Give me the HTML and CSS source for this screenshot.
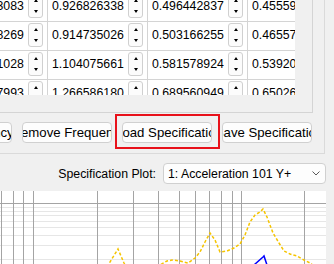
FILE: index.html
```html
<!DOCTYPE html>
<html>
<head>
  <title>Specification</title>
  <meta charset="UTF-8">
  <link rel="stylesheet" href="styles.css">
</head>
<body>
  <div class="panel">
    <div class="table-box">
      <div class="viewport">
        <div class="sheet">
          <div class="row">
            <div class="cell"><span class="val">0.853853083</span><span class="spin"></span></div>
            <div class="cell"><span class="val">0.926826338</span><span class="spin"></span></div>
            <div class="cell"><span class="val">0.496442837</span><span class="spin"></span></div>
            <div class="cell"><span class="val">0.455591203</span><span class="spin"></span></div>
          </div>
          <div class="row">
            <div class="cell"><span class="val">0.854718269</span><span class="spin"></span></div>
            <div class="cell"><span class="val">0.914735026</span><span class="spin"></span></div>
            <div class="cell"><span class="val">0.503166255</span><span class="spin"></span></div>
            <div class="cell"><span class="val">0.465572918</span><span class="spin"></span></div>
          </div>
          <div class="row">
            <div class="cell"><span class="val">1.012591028</span><span class="spin"></span></div>
            <div class="cell"><span class="val">1.104075661</span><span class="spin"></span></div>
            <div class="cell"><span class="val">0.581578924</span><span class="spin"></span></div>
            <div class="cell"><span class="val">0.539205816</span><span class="spin"></span></div>
          </div>
          <div class="row">
            <div class="cell"><span class="val">1.140767993</span><span class="spin"></span></div>
            <div class="cell"><span class="val">1.266586180</span><span class="spin"></span></div>
            <div class="cell"><span class="val">0.689560949</span><span class="spin"></span></div>
            <div class="cell"><span class="val">0.650264171</span><span class="spin"></span></div>
          </div>
        </div>
      </div>
    </div>
    <div class="actions">
      <button><span>Add Frequency</span></button>
      <button><span>Remove Frequency</span></button>
      <div class="focus-ring">
        <button><span>Load Specification</span></button>
      </div>
      <button><span>Save Specification</span></button>
    </div>
  </div>

  <div class="plot-row">
    <span>Specification Plot:</span>
    <div class="combo">
      <span>1: Acceleration 101 Y+</span>
      <svg width="8" height="5" viewBox="0 0 8 5"><polyline points="0.5,0.5 4,4 7.5,0.5" fill="none" stroke="#5a5a5a" stroke-width="1"/></svg>
    </div>
  </div>

  <div class="plot">
    <svg width="326" height="73" viewBox="0 0 326 73">
      <!-- minor horizontal grid -->
      <g stroke="#e6e6e6" stroke-width="1">
        <line x1="0" y1="16.5" x2="326" y2="16.5"/>
        <line x1="0" y1="20.5" x2="326" y2="20.5"/>
        <line x1="0" y1="24.5" x2="326" y2="24.5"/>
        <line x1="0" y1="30.5" x2="326" y2="30.5"/>
        <line x1="0" y1="36.5" x2="326" y2="36.5"/>
        <line x1="0" y1="44.5" x2="326" y2="44.5"/>
        <line x1="0" y1="54.5" x2="326" y2="54.5"/>
        <line x1="0" y1="68.5" x2="326" y2="68.5"/>
      </g>
      <!-- major grid -->
      <g stroke="#a4a4a4" stroke-width="1">
        <line x1="0" y1="12.5" x2="326" y2="12.5"/>
        <line x1="1.5" y1="0" x2="1.5" y2="73"/>
        <line x1="13.5" y1="0" x2="13.5" y2="73"/>
        <line x1="23.5" y1="0" x2="23.5" y2="73"/>
        <line x1="33.5" y1="0" x2="33.5" y2="73"/>
        <line x1="97.5" y1="0" x2="97.5" y2="73"/>
        <line x1="133.5" y1="0" x2="133.5" y2="73"/>
        <line x1="158.5" y1="0" x2="158.5" y2="73"/>
        <line x1="179.5" y1="0" x2="179.5" y2="73"/>
        <line x1="195.5" y1="0" x2="195.5" y2="73"/>
        <line x1="209.5" y1="0" x2="209.5" y2="73"/>
        <line x1="221.5" y1="0" x2="221.5" y2="73"/>
        <line x1="232.5" y1="0" x2="232.5" y2="73"/>
        <line x1="241.5" y1="0" x2="241.5" y2="73"/>
        <line x1="304.5" y1="0" x2="304.5" y2="73"/>
      </g>
      <polyline fill="none" stroke="#f5c400" stroke-width="1.5" stroke-dasharray="3 2"
        points="104,80 110,71 118,58 124,72 130,84 150,84 160,74 167,70 172,69 180,70 188,72 195,67 200,61 205,51 210,42 215,49 220,61 227,60 234,57 240,53 245,44 250,31 255,24 260,21 263,18 267,26 273,42 279,52 284,60 290,63 297,65 304,69 312,73"/>
      <polyline fill="none" stroke="#0000ff" stroke-width="1.5"
        points="254,74 263,66 264,65 267,74"/>
    </svg>
  </div>
</body>
</html>
```

FILE: styles.css
```css
body {
  margin: 0;
  width: 334px;
  height: 264px;
  overflow: hidden;
  background-color: #f0f0f0;
  font-family: "Liberation Sans", Arial, sans-serif;
  font-size: 12.3px;
  color: #000;
}

.panel {
  width: 324px;
  height: 153px;
  border-right: 1px solid #dadada;
  border-bottom: 1px solid #dadada;
}

.table-box {
  width: 312px;
  height: 112px;
  border-right: 1px solid #d4d4d4;
  border-bottom: 1px solid #d4d4d4;
}

.viewport {
  width: 295px;
  height: 95px;
  background-color: #fff;
  overflow: hidden;
}

/* table is scrolled a little right and down */
.sheet {
  margin-left: -52px;
  margin-top: -7px;
  width: 400px;
}

.row {
  display: flex;
  height: 28px;
  border-bottom: 1px solid #d4d4d4;
}

.cell {
  width: 100px;
  box-sizing: border-box;
  display: flex;
  align-items: flex-start;
  padding: 1px 4px 0 4px;
  border-right: 1px solid #d4d4d4;
}

.val {
  flex: 1;
  height: 24px;
  line-height: 24px;
  overflow: hidden;
  white-space: nowrap;
}

.spin {
  width: 15px;
  height: 24px;
  box-sizing: border-box;
  border: 1px solid #d0d0d0;
  border-radius: 3px;
  background-color: #fcfcfc;
  display: flex;
  flex-direction: column;
  align-items: center;
  justify-content: space-around;
}

.spin::before,
.spin::after {
  content: "";
  border-left: 2.5px solid transparent;
  border-right: 2.5px solid transparent;
}

.spin::before {
  border-bottom: 3px solid #000;
}

.spin::after {
  border-top: 3px solid #000;
}

.actions {
  display: flex;
  align-items: flex-start;
  gap: 10px;
  margin: 9px 0 0 -78px;
}

.actions button {
  flex: none;
  width: 90px;
  height: 21px;
  padding: 0 0 0 4px;
  border: 1px solid #d0d0d0;
  border-radius: 4px;
  background-color: #fdfdfd;
  font: inherit;
  font-size: 13.2px;
  color: #000;
  display: flex;
  justify-content: center;
  align-items: center;
  overflow: hidden;
  white-space: nowrap;
}

.actions button span {
  flex: none;
}

/* red highlight box around the load button */
.focus-ring {
  flex: none;
  display: flex;
  padding: 6px 6px 4px 5px;
  margin: -8px -8px -6px -7px;
  border: 2px solid #e8111a;
}

.plot-row {
  display: flex;
  justify-content: flex-end;
  align-items: center;
  gap: 7px;
  height: 21px;
  margin-top: 9px;
  padding-right: 8px;
}

.combo {
  width: 163px;
  height: 21px;
  box-sizing: border-box;
  display: flex;
  align-items: center;
  justify-content: space-between;
  padding: 0 5px 0 4px;
  border: 1px solid #d0d0d0;
  border-radius: 4px;
  background-color: #fdfdfd;
}

.plot {
  width: 326px;
  height: 73px;
  margin-top: 7px;
  background-color: #fff;
}

.plot svg {
  display: block;
}
```
